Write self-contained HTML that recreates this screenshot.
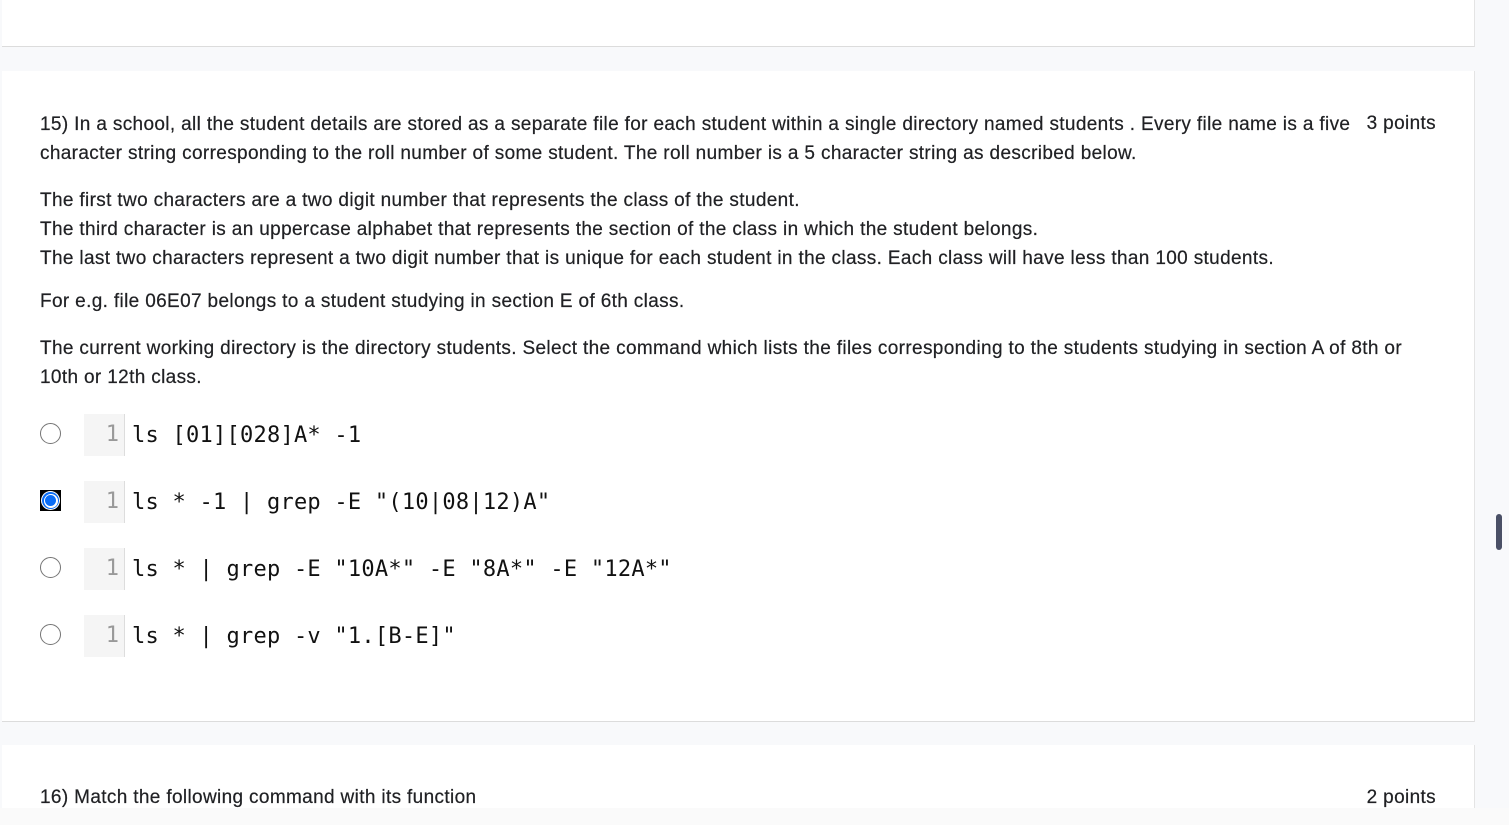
<!DOCTYPE html>
<html><head><style>
body{margin:0;width:1509px;height:825px;background:#f8f9fb;position:relative;overflow:hidden;font-family:"Liberation Sans",Arial,sans-serif;color:#202124}
.card{position:absolute;left:2px;width:1472px;background:#fff;border-right:1px solid #e4e4e4;border-bottom:1px solid #dcdcdc}
.t{position:absolute;left:38px;font-size:19px;line-height:29px;letter-spacing:0.35px;-webkit-text-stroke:0.2px #202124}
.pts{position:absolute;right:38px;font-size:19px;letter-spacing:0.35px;-webkit-text-stroke:0.2px #202124}
.opt{position:absolute;left:38px;height:42px}
.rad{position:absolute;left:0;top:9px;width:21px;height:21px;border:1.5px solid #757575;border-radius:50%;box-sizing:border-box}
.gut{position:absolute;left:44px;top:0;width:41px;height:42px;background:#f5f5f5;border-right:1px solid #ddd;box-sizing:border-box;text-align:right;padding-right:5px;font:22px/42px "DejaVu Sans Mono",monospace;color:#999}
.code{position:absolute;left:92px;top:1px;white-space:pre;font:22px/42px "DejaVu Sans Mono",monospace;letter-spacing:0.25px;color:#111}
</style></head><body>
<div class="card" style="top:0;height:46px"></div>
<div class="card" style="top:71px;height:650px">
<div class="t" style="top:39px;width:1320px">15) In a school, all the student details are stored as a separate file for each student within a single directory named students . Every file name is a five character string corresponding to the roll number of some student. The roll number is a 5 character string as described below.</div>
<div class="pts" style="top:42px">3 points</div>
<div class="t" style="top:115px;width:1410px">The first two characters are a two digit number that represents the class of the student.<br>The third character is an uppercase alphabet that represents the section of the class in which the student belongs.<br>The last two characters represent a two digit number that is unique for each student in the class. Each class will have less than 100 students.</div>
<div class="t" style="top:216px">For e.g. file 06E07 belongs to a student studying in section E of 6th class.</div>
<div class="t" style="top:263px;width:1390px">The current working directory is the directory students. Select the command which lists the files corresponding to the students studying in section A of 8th or 10th or 12th class.</div>
<div class="opt" style="top:343px"><div class="rad"></div><div class="gut">1</div><div class="code">ls [01][028]A* -1</div></div>
<div class="opt" style="top:410px"><div class="rad" style="border:none;width:21px;height:21px;left:0;top:9px;background:#000;border-radius:0"><div style="position:absolute;left:1px;top:1px;width:19px;height:19px;border-radius:50%;background:#fff"></div><div style="position:absolute;left:2px;top:2px;width:17px;height:17px;border-radius:50%;background:#0a6cf5"></div><div style="position:absolute;left:3.5px;top:3.5px;width:14px;height:14px;border-radius:50%;background:#fff"></div><div style="position:absolute;left:5px;top:5px;width:11px;height:11px;border-radius:50%;background:#0a6cf5"></div></div><div class="gut">1</div><div class="code">ls * -1 | grep -E "(10|08|12)A"</div></div>
<div class="opt" style="top:477px"><div class="rad"></div><div class="gut">1</div><div class="code">ls * | grep -E "10A*" -E "8A*" -E "12A*"</div></div>
<div class="opt" style="top:544px"><div class="rad"></div><div class="gut">1</div><div class="code">ls * | grep -v "1.[B-E]"</div></div>
</div>
<div class="card" style="top:745px;height:63px;border-bottom:none">
<div class="t" style="top:38px">16) Match the following command with its function</div>
<div class="pts" style="top:42px">2 points</div>
</div>
<div style="position:absolute;left:0;top:808px;width:1509px;height:17px;background:#fafafa"></div>
<div style="position:absolute;left:1496px;top:514px;width:6px;height:36px;border-radius:3px;background:#4a5066"></div>
</body></html>
